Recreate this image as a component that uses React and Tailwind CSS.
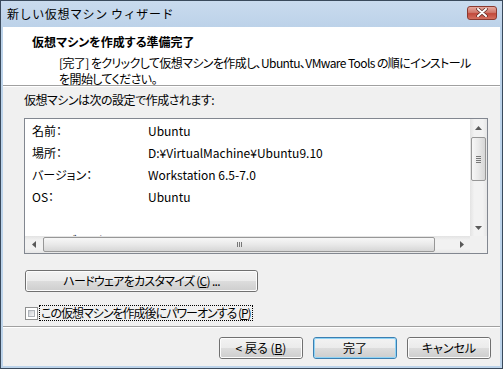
import React from "react";

const FONT = "font-['Noto_Sans_CJK_JP','Noto_Sans',sans-serif] [font-feature-settings:'palt']";

function Btn({ children, def = false, className = "" }) {
    return (
        <div className={`h-[22px] rounded-[3px] border ${def ? "border-[#3c7fb1]" : "border-[#707070]"} flex ${className}`}>
            <div className={`flex-1 rounded-[2px] border ${def ? "border-[#8fd3f5]" : "border-[#fcfcfc]"} bg-[linear-gradient(to_bottom,#f2f2f2_0%,#ebebeb_50%,#dddddd_50%,#cfcfcf_100%)] flex items-center justify-center text-[12px] leading-none text-black whitespace-nowrap`}>
                {children}
            </div>
        </div>
    );
}

function Arrow({ dir }) {
    const pts = {
        up: "0,4 3.5,0 7,4",
        down: "0,0 3.5,4 7,0",
        left: "4,0 0,3.5 4,7",
        right: "0,0 4,3.5 0,7",
    }[dir];
    const w = dir === "up" || dir === "down" ? 7 : 4;
    const h = dir === "up" || dir === "down" ? 4 : 7;
    return (
        <svg width={w} height={h} viewBox={`0 0 ${w} ${h}`}>
            <polygon points={pts} fill="#5a5a5a" />
        </svg>
    );
}

function VScroll() {
    return (
        <div className="w-[17px] flex flex-col bg-[linear-gradient(to_right,#e3e3e3,#f2f2f2_25%,#f2f2f2_75%,#e6e6e6)]">
            <div className="h-[17px] flex items-center justify-center"><Arrow dir="up" /></div>
            <div className="flex-1 flex flex-col">
                <div className="mt-px mx-px h-[44px] rounded-[2px] border border-[#979797] bg-[linear-gradient(to_right,#f7f7f7,#e9e9e9_50%,#d6d6d6)] flex flex-col items-center justify-center gap-px">
                    <div className="w-[5px] h-px bg-[#777]" />
                    <div className="w-[5px] h-px bg-[#777]" />
                    <div className="w-[5px] h-px bg-[#777]" />
                    <div className="w-[5px] h-px bg-[#777]" />
                </div>
            </div>
            <div className="h-[17px] flex items-center justify-center"><Arrow dir="down" /></div>
        </div>
    );
}

function HScroll() {
    return (
        <div className="flex-1 flex items-stretch bg-[linear-gradient(to_bottom,#e3e3e3,#f2f2f2_25%,#f2f2f2_75%,#e6e6e6)]">
            <div className="w-[17px] flex items-center justify-center"><Arrow dir="left" /></div>
            <div className="ml-px my-px w-[392px] rounded-[2px] border border-[#979797] bg-[linear-gradient(to_bottom,#f7f7f7,#e9e9e9_50%,#d6d6d6)] flex items-center justify-center gap-px">
                <div className="w-px h-[5px] bg-[#777]" />
                <div className="w-px h-[5px] bg-[#777]" />
                <div className="w-px h-[5px] bg-[#777]" />
            </div>
            <div className="flex-1" />
            <div className="w-[17px] flex items-center justify-center"><Arrow dir="right" /></div>
        </div>
    );
}

const rows = [
    ["名前：", "Ubuntu"],
    ["場所：", "D:¥VirtualMachine¥Ubuntu9.10"],
    ["バージョン：", "Workstation 6.5-7.0"],
    ["OS：", "Ubuntu"],
    ["", ""],
    ["ハードディスク：", ""],
];

export default function App() {
    return (
        <div className={`w-[503px] h-[369px] border border-[#3a4a5c] bg-[#bcd3ea] flex flex-col ${FONT} text-[12px] text-black`}>
            {/* title bar */}
            <div className="h-[26px] flex items-center justify-between pl-[6px] pr-[5px] bg-[linear-gradient(to_bottom,#c9dbee,#bcd2e9)]">
                <span className="text-[12px] leading-none [font-feature-settings:normal] tracking-[0.6px]">新しい仮想マシン ウィザード</span>
                <div className="w-[30px] h-[14px] mt-[-3px] rounded-[3px] border border-[#8b3a30] bg-[linear-gradient(to_bottom,#e6a89e,#d0786b_45%,#c2493b_55%,#d4705f)] flex items-center justify-center">
                    <svg width="12" height="9" viewBox="0 0 12 9">
                        <path d="M2 1 L10 8 M10 1 L2 8" stroke="#5a2a24" strokeWidth="3.4" strokeLinecap="round" />
                        <path d="M2 1 L10 8 M10 1 L2 8" stroke="#ffffff" strokeWidth="2" strokeLinecap="round" />
                    </svg>
                </div>
            </div>

            {/* client area */}
            <div className="flex-1 mx-[2px] mb-[2px] bg-[#f0f0f0] flex flex-col">
                {/* header */}
                <div className="h-[59px] bg-white border-b border-[#a0a0a0] pt-[7px] whitespace-nowrap">
                    <p className="pl-[29px] font-bold leading-[16px]">仮想マシンを作成する準備完了</p>
                    <p className="pl-[56px] mt-[5px] leading-[16px] tracking-[-0.6px]">[完了] をクリックして仮想マシンを作成し、Ubuntu、VMware Tools の順にインストール<br />を開始してください。</p>
                </div>
                <div className="h-px bg-white" />

                <p className="ml-[21px] mt-[5px] leading-[16px] tracking-[-0.5px]">仮想マシンは次の設定で作成されます:</p>

                {/* summary list */}
                <div className="mt-[10px] ml-[21px] w-[464px] h-[136px] border border-[#828790] bg-white flex flex-col">
                    <div className="flex flex-1 min-h-0">
                        <div className="flex-1 overflow-hidden pt-px">
                            {rows.map(([k, v], i) => (
                                <div key={i} className="h-[22px] flex items-center leading-none whitespace-nowrap">
                                    <span className="w-[123px] pl-[7px]">{k}</span>
                                    <span>{v}</span>
                                </div>
                            ))}
                        </div>
                        <VScroll />
                    </div>
                    <div className="h-[17px] flex">
                        <HScroll />
                        <div className="w-[17px] bg-[#f0f0f0]" />
                    </div>
                </div>

                <Btn className="mt-[16px] ml-[22px] w-[233px]"><span className="tracking-[-0.7px]">ハードウェアをカスタマイズ (<span className="underline">C</span>) ...</span></Btn>

                {/* power on checkbox */}
                <div className="mt-[13px] ml-[22px] flex items-center">
                    <div className="w-[13px] h-[13px] border border-[#8e8f8f] bg-white p-[2px]">
                        <div className="w-full h-full bg-[linear-gradient(135deg,#cbcfd5,#f6f6f6)] border border-[#aeb3b9]" />
                    </div>
                    <span className="ml-px h-[16px] px-px border border-dotted border-black leading-[14px] whitespace-nowrap tracking-[-1px]">この仮想マシンを作成後にパワーオンする (<span className="underline">P</span>)</span>
                </div>

                <div className="mt-[5px] h-px bg-[#a0a0a0]" />
                <div className="h-px bg-white" />

                <div className="mt-[9px] pr-[9px] flex justify-end gap-[10px]">
                    <Btn className="w-[84px]">&lt; 戻る (<span className="underline">B</span>)</Btn>
                    <Btn def className="w-[84px]">完了</Btn>
                    <Btn className="w-[84px]">キャンセル</Btn>
                </div>
            </div>
        </div>
    );
}
